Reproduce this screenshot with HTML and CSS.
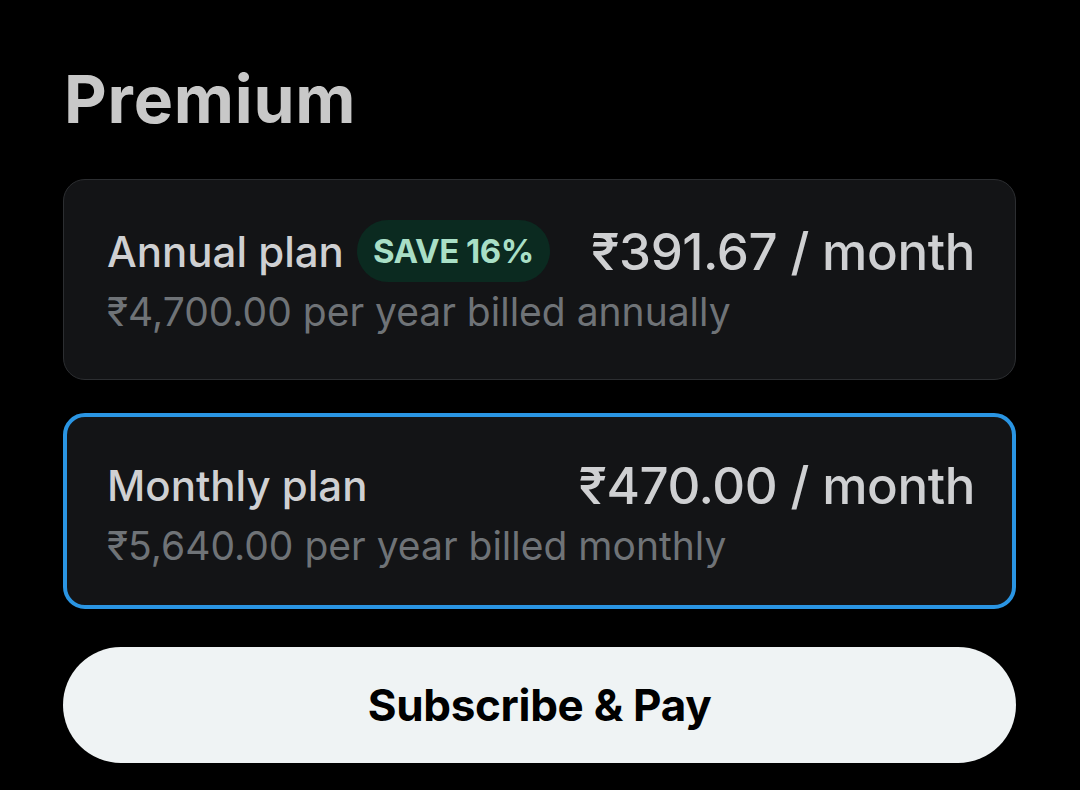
FILE: index.html
```html
<!DOCTYPE html>
<html>
<head>
<meta charset="utf-8">
<link rel="stylesheet" href="styles.css">
</head>
<body>
<div class="page">
  <h1 class="title">Premium</h1>
  <div class="plan">
    <div class="row">
      <div class="name">Annual plan <span class="badge">SAVE 16%</span></div>
      <div class="price">₹391.67 / month</div>
    </div>
    <div class="sub">₹4,700.00 per year billed annually</div>
  </div>
  <div class="plan selected">
    <div class="row">
      <div class="name">Monthly plan</div>
      <div class="price">₹470.00 / month</div>
    </div>
    <div class="sub">₹5,640.00 per year billed monthly</div>
  </div>
  <button class="cta">Subscribe &amp; Pay</button>
</div>
</body>
</html>
```
FILE: styles.css
```css
html, body {
  margin: 0;
  padding: 0;
  background: #000;
}
body {
  font-family: Inter, "Noto Sans", sans-serif;
  color: #d0d0d0;
}
.page {
  padding: 59px 64px 0 63px;
  display: flex;
  flex-direction: column;
}
.title {
  margin: 0 0 0 1px;
  font-size: 66px;
  font-weight: 700;
  line-height: 80px;
  color: #c8c8c8;
  letter-spacing: 0.8px;
}
.plan {
  margin-top: 40px;
  background: #131416;
  border: 1px solid #2c2e31;
  border-radius: 22px;
  padding: 40px 40px 44px 43px;
  display: flex;
  flex-direction: column;
  gap: 6px;
}
.plan.selected {
  margin-top: 33px;
  border: 4px solid #2a95e3;
  padding: 37px 37px 36px 40px;
}
.row {
  display: flex;
  justify-content: space-between;
  align-items: center;
  min-height: 62px;
}
.name {
  font-size: 42px;
  font-weight: 500;
  color: #cfd0d2;
  display: flex;
  align-items: center;
  gap: 13px;
  letter-spacing: 0;
}
.badge {
  background: #0b2a20;
  color: #a9dfc6;
  font-size: 33px;
  font-weight: 700;
  border-radius: 31px;
  height: 62px;
  padding: 0 16px;
  display: flex;
  align-items: center;
  letter-spacing: -0.5px;
}
.price {
  font-size: 51px;
  font-weight: 500;
  color: #cfd0d2;
  letter-spacing: -0.4px;
}
.sub {
  font-size: 39px;
  line-height: 47px;
  color: #6f7377;
  letter-spacing: 0;
}
.cta {
  margin-top: 38px;
  height: 116px;
  border: none;
  border-radius: 58px;
  background: #eff3f4;
  color: #000;
  font-family: Inter, "Noto Sans", sans-serif;
  font-size: 44px;
  font-weight: 700;
  letter-spacing: -0.3px;
}
```
